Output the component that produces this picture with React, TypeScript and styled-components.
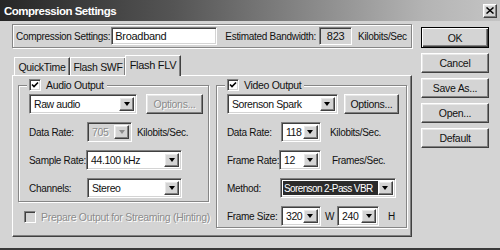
import React from "react";
import styled, { createGlobalStyle, css } from "styled-components";

const face = "#d4d4d4";

const GlobalStyle = createGlobalStyle`
  html, body {
    margin: 0;
    padding: 0;
    background: ${face};
  }
  body {
    font-family: "Liberation Sans", Arial, sans-serif;
    font-size: 10px;
    letter-spacing: -0.3px;
    color: #111;
  }
`;

const raised = css`
  border: 1px solid;
  border-color: #ffffff #404040 #404040 #ffffff;
  box-shadow: inset -1px -1px 0 #808080, inset 1px 1px 0 #e8e8e8;
`;

const sunken = css`
  border: 1px solid;
  border-color: #808080 #ffffff #ffffff #808080;
  box-shadow: inset 1px 1px 0 #404040, inset -1px -1px 0 ${face};
`;

const etched = css`
  border: 1px solid #868686;
  box-shadow: 1px 1px 0 #ffffff, inset 1px 1px 0 #ffffff;
`;

const Window = styled.div`
  width: 500px;
  height: 250px;
  box-sizing: border-box;
  background: ${face};
  border-bottom: 2px solid #3a3a3a;
  display: flex;
  flex-direction: column;
  overflow: hidden;
`;

const TitleBar = styled.div`
  height: 21px;
  flex: none;
  display: flex;
  align-items: center;
  justify-content: space-between;
  padding: 0 3px 0 4px;
  background: linear-gradient(to right, #262626 0%, #555555 35%, #b4b4b4 85%, #c4c4c4 100%);
  color: #fff;
  font-weight: bold;
  font-size: 11.5px;
  letter-spacing: -0.5px;
`;

const CloseButton = styled.div`
  width: 14px;
  height: 14px;
  box-sizing: border-box;
  background: ${face};
  ${raised};
  display: flex;
  align-items: center;
  justify-content: center;
`;

const Body = styled.div`
  display: flex;
  padding: 3px 0 0 12px;
`;

const MainColumn = styled.div`
  width: 400px;
  display: flex;
  flex-direction: column;
`;

const SettingsBox = styled.div`
  height: 24px;
  box-sizing: border-box;
  ${etched};
  display: flex;
  align-items: center;
  padding-left: 3px;
`;

const Text = styled.span<{ $ml?: number; $disabled?: boolean }>`
  margin-left: ${(p) => p.$ml ?? 0}px;
  white-space: nowrap;
  color: ${(p) => (p.$disabled ? "#8c8c8c" : "#111")};
  text-shadow: ${(p) => (p.$disabled ? "1px 1px 0 #fff" : "none")};
`;

const TextField = styled.div<{ $w: number; $ml?: number; $readOnly?: boolean }>`
  width: ${(p) => p.$w}px;
  height: 18px;
  box-sizing: border-box;
  margin-left: ${(p) => p.$ml ?? 0}px;
  ${sunken};
  background: ${(p) => (p.$readOnly ? face : "#fff")};
  display: flex;
  align-items: center;
  justify-content: ${(p) => (p.$readOnly ? "center" : "flex-start")};
  padding-left: ${(p) => (p.$readOnly ? 0 : 3)}px;
  font-size: 11px;
`;

const TabRow = styled.div`
  display: flex;
  align-items: flex-end;
  height: 20px;
  margin-top: 7px;
  padding-left: 2px;
`;

const Tab = styled.div<{ $active?: boolean }>`
  width: 56px;
  height: ${(p) => (p.$active ? 21 : 18)}px;
  box-sizing: border-box;
  display: flex;
  align-items: center;
  justify-content: center;
  background: ${face};
  border: 1px solid;
  border-bottom: none;
  border-color: #ffffff #404040 transparent #ffffff;
  box-shadow: inset -1px 0 0 #808080;
  font-size: ${(p) => (p.$active ? 11 : 10.5)}px;
  position: relative;
  z-index: ${(p) => (p.$active ? 1 : 0)};
  margin: 0 ${(p) => (p.$active ? -1 : 0)}px ${(p) => (p.$active ? -1 : 0)}px;
  padding-bottom: ${(p) => (p.$active ? 2 : 0)}px;
`;

const TabPanel = styled.div`
  height: 162px;
  box-sizing: border-box;
  border: 1px solid;
  border-color: #ffffff #404040 #404040 #ffffff;
  box-shadow: inset -1px -1px 0 #808080;
  display: flex;
  gap: 6px;
  padding: 9px 0 0 5px;
`;

const Column = styled.div`
  display: flex;
  flex-direction: column;
`;

const GroupBox = styled.div<{ $h: number }>`
  width: 191px;
  height: ${(p) => p.$h}px;
  box-sizing: border-box;
  ${etched};
  position: relative;
  padding: 8px 0 0 10px;
  display: flex;
  flex-direction: column;
  gap: 8px;
`;

const GroupCaption = styled.div`
  position: absolute;
  top: -7px;
  left: 8px;
  padding: 0 3px 0 2px;
  background: ${face};
  display: flex;
  align-items: center;
  gap: 5px;
  font-size: 10.5px;
`;

const Check = styled.div<{ $disabled?: boolean }>`
  width: 12px;
  height: 12px;
  box-sizing: border-box;
  ${sunken};
  background: ${(p) => (p.$disabled ? face : "#fff")};
  display: flex;
  align-items: center;
  justify-content: center;
`;

const Row = styled.div`
  height: 20px;
  display: flex;
  align-items: center;
`;

const Label = styled.span<{ $w: number }>`
  width: ${(p) => p.$w}px;
  flex: none;
  white-space: nowrap;
`;

const SelectBox = styled.div<{ $w: number; $ml?: number; $disabled?: boolean }>`
  width: ${(p) => p.$w}px;
  height: 20px;
  flex: none;
  box-sizing: border-box;
  margin-left: ${(p) => p.$ml ?? 0}px;
  ${sunken};
  background: ${(p) => (p.$disabled ? face : "#fff")};
  display: flex;
  align-items: center;
  padding: 2px;
  font-size: 10.5px;
  letter-spacing: -0.4px;
`;

const SelectValue = styled.div<{ $highlight?: boolean; $disabled?: boolean }>`
  flex: 1;
  min-width: 0;
  height: 100%;
  display: flex;
  align-items: center;
  padding-left: 2px;
  overflow: hidden;
  white-space: nowrap;
  background: ${(p) => (p.$highlight ? "#2b2b2b" : "transparent")};
  color: ${(p) => (p.$highlight ? "#fff" : p.$disabled ? "#8c8c8c" : "#111")};
  text-shadow: ${(p) => (p.$disabled ? "1px 1px 0 #fff" : "none")};
  ${(p) =>
    p.$highlight &&
    css`
      font-size: 10px;
      letter-spacing: -0.6px;
      padding-left: 1px;
    `}
`;

const ArrowButton = styled.div<{ $disabled?: boolean }>`
  width: 15px;
  height: 100%;
  flex: none;
  box-sizing: border-box;
  background: ${face};
  ${raised};
  display: flex;
  align-items: center;
  justify-content: center;

  &::after {
    content: "";
    border-left: 3.5px solid transparent;
    border-right: 3.5px solid transparent;
    border-top: 4px solid ${(p) => (p.$disabled ? "#8c8c8c" : "#000")};
  }
`;

const PushButton = styled.div<{ $w: number; $h?: number; $ml?: number; $default?: boolean; $disabled?: boolean }>`
  width: ${(p) => p.$w}px;
  height: ${(p) => p.$h ?? 20}px;
  flex: none;
  box-sizing: border-box;
  margin-left: ${(p) => p.$ml ?? 0}px;
  background: ${face};
  ${raised};
  ${(p) =>
    p.$default &&
    css`
      border-color: #000;
      box-shadow: inset 1px 1px 0 #fff, inset -1px -1px 0 #404040, inset -2px -2px 0 #808080;
    `}
  display: flex;
  align-items: center;
  justify-content: center;
  font-size: 10.5px;
  color: ${(p) => (p.$disabled ? "#8c8c8c" : "#111")};
  text-shadow: ${(p) => (p.$disabled ? "1px 1px 0 #fff" : "none")};
`;

const StreamingRow = styled.div`
  display: flex;
  align-items: center;
  gap: 5px;
  margin: 9px 0 0 6px;
  font-size: 10.5px;
`;

const ButtonColumn = styled.div`
  display: flex;
  flex-direction: column;
  gap: 5px;
  margin: 3px 0 0 9px;
`;

const CheckMark = () => (
  <svg width="8" height="8" viewBox="0 0 8 8">
    <path d="M1 3.5 L3 5.5 L7 1.5" fill="none" stroke="#000" strokeWidth="1.6" />
  </svg>
);

const CloseIcon = () => (
  <svg width="8" height="7" viewBox="0 0 8 7">
    <path d="M0.5 0.5 L7.5 6.5 M7.5 0.5 L0.5 6.5" stroke="#000" strokeWidth="1.5" />
  </svg>
);

type SelectProps = {
  w: number;
  value: string;
  ml?: number;
  disabled?: boolean;
  highlight?: boolean;
};

const Select = ({ w, value, ml, disabled, highlight }: SelectProps) => (
  <SelectBox $w={w} $ml={ml} $disabled={disabled}>
    <SelectValue $highlight={highlight} $disabled={disabled}>
      {value}
    </SelectValue>
    <ArrowButton $disabled={disabled} />
  </SelectBox>
);

export default function App() {
  return (
    <Window>
      <GlobalStyle />
      <TitleBar>
        <span>Compression Settings</span>
        <CloseButton>
          <CloseIcon />
        </CloseButton>
      </TitleBar>
      <Body>
        <MainColumn>
          <SettingsBox>
            <Text>Compression Settings:</Text>
            <TextField $w={106} $ml={1}>Broadband</TextField>
            <Text $ml={8}>Estimated Bandwidth:</Text>
            <TextField $w={33} $ml={3} $readOnly>823</TextField>
            <Text $ml={6}>Kilobits/Sec</Text>
          </SettingsBox>

          <TabRow>
            <Tab>QuickTime</Tab>
            <Tab>Flash SWF</Tab>
            <Tab $active>Flash FLV</Tab>
          </TabRow>

          <TabPanel>
            <Column>
              <GroupBox $h={117}>
                <GroupCaption>
                  <Check>
                    <CheckMark />
                  </Check>
                  Audio Output
                </GroupCaption>
                <Row>
                  <Select w={108} value="Raw audio" />
                  <PushButton $w={57} $ml={9} $disabled>Options...</PushButton>
                </Row>
                <Row>
                  <Label $w={58}>Data Rate:</Label>
                  <Select w={45} value="705" disabled />
                  <Text $ml={5}>Kilobits/Sec.</Text>
                </Row>
                <Row>
                  <Label $w={57}>Sample Rate:</Label>
                  <Select w={96} value="44.100 kHz" />
                </Row>
                <Row>
                  <Label $w={58}>Channels:</Label>
                  <Select w={95} value="Stereo" />
                </Row>
              </GroupBox>
              <StreamingRow>
                <Check $disabled />
                <Text $disabled>Prepare Output for Streaming (Hinting)</Text>
              </StreamingRow>
            </Column>

            <Column>
              <GroupBox $h={143}>
                <GroupCaption>
                  <Check>
                    <CheckMark />
                  </Check>
                  Video Output
                </GroupCaption>
                <Row>
                  <Select w={111} value="Sorenson Spark" />
                  <PushButton $w={55} $ml={6}>Options...</PushButton>
                </Row>
                <Row>
                  <Label $w={54}>Data Rate:</Label>
                  <Select w={40} value="118" />
                  <Text $ml={9}>Kilobits/Sec.</Text>
                </Row>
                <Row>
                  <Label $w={52}>Frame Rate:</Label>
                  <Select w={42} value="12" />
                  <Text $ml={11}>Frames/Sec.</Text>
                </Row>
                <Row>
                  <Label $w={53}>Method:</Label>
                  <Select w={116} value="Sorenson 2-Pass VBR" highlight />
                </Row>
                <Row>
                  <Label $w={54}>Frame Size:</Label>
                  <Select w={40} value="320" />
                  <Text $ml={4}>W</Text>
                  <Select w={42} value="240" ml={3} />
                  <Text $ml={9}>H</Text>
                </Row>
              </GroupBox>
            </Column>
          </TabPanel>
        </MainColumn>

        <ButtonColumn>
          <PushButton $w={68} $h={21} $default>OK</PushButton>
          <PushButton $w={68}>Cancel</PushButton>
          <PushButton $w={68}>Save As...</PushButton>
          <PushButton $w={68}>Open...</PushButton>
          <PushButton $w={68}>Default</PushButton>
        </ButtonColumn>
      </Body>
    </Window>
  );
}
